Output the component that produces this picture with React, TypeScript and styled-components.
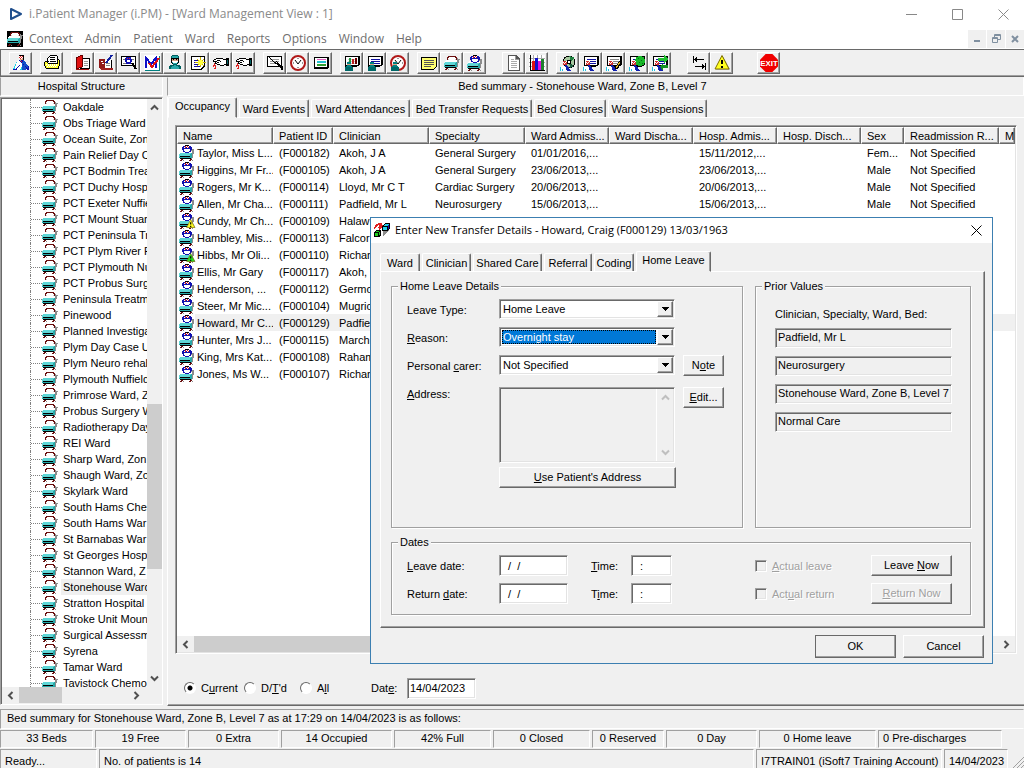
import React from 'react';
import styled, { createGlobalStyle, css } from 'styled-components';

const face = '#f0f0f0';
const shade = '#a0a0a0';
const dark = '#696969';
const light = '#e3e3e3';

const GlobalStyle = createGlobalStyle`
  * { box-sizing: border-box; }
  body {
    margin: 0;
    background: ${face};
    color: #000;
    font: 11px/14px "Liberation Sans", Arial, sans-serif;
  }
  button, input, select, textarea { font: inherit; color: inherit; margin: 0; border-radius: 0; }
`;

const sunken = css`
  border: 1px solid;
  border-color: ${shade} #fff #fff ${shade};
  box-shadow: inset 1px 1px 0 ${dark}, inset -1px -1px 0 ${light};
`;

const Screen = styled.div`
  position: relative;
  display: flex;
  flex-direction: column;
  height: 100vh;
  min-width: 1000px;
  overflow: hidden;
`;

/* ---------- pixel drawings ---------- */

const inks: Record<string, string> = {
  K: '#000', m: '#6b1010', w: '#fff', t: '#5fd6d6', T: '#28a8a8', g: '#8c8c8c', b: '#1010b0',
  r: '#e02020', y: '#ffff30', G: '#20d020', B: '#1450c8', n: '#d0d0d0', d: '#006060', c: '#20d0e8', p: '#d8a080',
};

const bedRows = [
  '....mmmmmmmm....',
  '...mmwwwwwwmm...',
  '...mwwwwwwwwmg..',
  '...mnwwwwwwnmggg',
  '..wwwwwwwwwwwgg.',
  '.wwwwwwwwwwwwgg.',
  '.tttttttttttTgg.',
  'tttttttttttTTg..',
  'tttttttttttTTg..',
  'tKKKKKKKKKKTTg..',
  'TTTTTTTTTTTTTg..',
  '.KKKKKKKKKKKg...',
  '..mm.......mm...',
  '.mm.g.....mm.g..',
];

const patientRows = [
  '......KKKK......',
  '....bbrwrwbb....',
  '...bbwrbwrbbb...',
  '...bbbbbbbbbb...',
  '...bbwwwwwwbbgg.',
  '....bwwwwwwbggg.',
  '..wwbbwwwwbbwgg.',
  '.wwwwwbbbbwwwgg.',
  '.tttttttttttTgg.',
  'tttttttttttTTg..',
  'tttttttttttTTg..',
  'tKKKKKKKKKKTTg..',
  'TTTTTTTTTTTTTg..',
  '.KKKKKKKKKKKg...',
  '..mm.......mm...',
  '.mm.g.....mm.g..',
];

const cubeRows = [
  '....rrrr...KKKKK',
  '..rrrrrr..KccccK',
  '.rrr.rrrrKccccbK',
  '.rr..rrrKKKKKKbK',
  'rr..rrrrKccccKbK',
  'r....rr.KccccKbK',
  '.....r..KccccKK.',
  '..KKKKK.KKKKKKg.',
  '.KGGGKK..ggggg..',
  'KKKKKGK..gggg...',
  'KGGGKGK..ggg....',
  'KGGGKGK..gg.....',
  'KGGGKKK..g......',
  'KKKKKK..........',
];

const doctorRows = [
  '......KKKKK.....',
  '......wrwrK.....',
  '......rwrwK.....',
  '......wrwpK.....',
  '.......pppK.....',
  '.....wbpbbB.....',
  '....wwwbrbBB....',
  '...cwwwwbBBBB...',
  '...wwwwwwBBBB...',
  '..cwwwwwwBbBBB..',
  '..cwwwbwwBBBBBB.',
  '.cwwwbwwwBBBbBBb',
  '.cwwbwwwcBBBBbBb',
  'ccwbwwwwcBBBBbbb',
  'bbbbwwwccBBBB.bb',
];

const folderRows = [
  '......KKKKKKK...',
  '.....KwwwwwwwK..',
  '....KwKKKKKwwK..',
  '...KwwwwwwwwwK..',
  '...KwwKKKKKwwKK.',
  '...KwwwwwwwwwKyK',
  '.KKKKwKKKKKKwKyK',
  'KyyKwwwwwwwwwKyK',
  'KyyyKKKKKKKKKKyK',
  'KywywywywywywyyK',
  'KyyywywywywywyyK',
  '.KywywywywywyyK.',
  '.KyyyyyyyyyyyyK.',
  '..KKKKKKKKKKKKK.',
];

const surgeonRows = [
  '.....dddddd.....',
  '....dTTTTTTd....',
  '....dTTTTTTd....',
  '....KKKKKKKK....',
  '....KpKppKpK....',
  '....KppppppK....',
  '....KwwwwwwK....',
  '....KTwwwwTK....',
  '.....KTTTTK.....',
  '......dddd......',
  '...ddddTTdddd...',
  '..dddTTTTTTddd..',
  '..ddTTTTTTTTdd..',
  '..ddTTTTTTTTdd..',
];

const handRows = [
  '...KKKKKKK...KKK',
  '.KKwwwwwwwKKKKKK',
  'KwwwKKKwwwwwwKdK',
  'KKKKwwwKwwwwwKdK',
  '..KwKKwwwwwwwKdK',
  '.rKKwwwwwwwwwKdK',
  '.r..KKKwwwwKKKKK',
  'rrr....KKKK..KKK',
  'r.r.............',
  '..r.............',
  '.rr.............',
];

function Pixels({ rows }: { rows: string[] }) {
  const rects: React.ReactElement[] = [];
  rows.forEach((row, y) => {
    let x = 0;
    while (x < row.length) {
      let end = x + 1;
      while (end < row.length && row[end] === row[x]) end += 1;
      if (row[x] !== '.') {
        rects.push(<rect key={`${x}-${y}`} x={x} y={y} width={end - x} height={1} fill={inks[row[x]]} />);
      }
      x = end;
    }
  });
  return <>{rects}</>;
}

const Drawing = styled.svg`
  display: block;
  flex: none;
  shape-rendering: crispEdges;
`;

function Sprite({ rows }: { rows: string[] }) {
  return (
    <Drawing width="16" height={rows.length} viewBox={`0 0 16 ${rows.length}`} aria-hidden="true">
      <Pixels rows={rows} />
    </Drawing>
  );
}

/* ---------- toolbar drawings, each on a 16 x 16 grid ---------- */

const Sheet = ({ ink = '#000' }: { ink?: string }) => (
  <>
    <path d="M1 1h15v9h-1v1h-2v1H1z" fill="#000" />
    <path d="M2 2h12v8H2z" fill="#fff" />
    <path d="M4 4h9v1H4zM4 6h9v1H4zM4 8h9v1H4z" fill={ink} />
  </>
);

const TealPerson = () => (
  <g>
    <path d="M3 7h4v4H3z" fill="#008080" />
    <path d="M3 9h4v1H3z" fill="#d8a080" />
    <path d="M1 12h8v4H1z" fill="#006868" />
    <path d="M2 11h6v1H2z" fill="#008080" />
  </g>
);

const BluePerson = () => (
  <g>
    <path d="M3 6h4v4H3z" fill="#d03030" />
    <path d="M3 7h1v1H3zM5 7h1v1H5zM4 8h1v1H4zM6 6h1v1H6z" fill="#fff" />
    <path d="M1 11h4l4 5H0v-3z" fill="#fff" />
    <path d="M5 10l3 1 3 5H7z" fill="#1020b0" />
    <path d="M0 12h1v4H0zM2 14h1v2H2z" fill="#20c0e0" />
  </g>
);

const Clock = () => (
  <g shapeRendering="auto">
    <circle cx="8" cy="8" r="7" fill="#fff" stroke="#b01818" strokeWidth="2" />
    <path d="M8 9L5 5M8 9l3-4" fill="none" stroke="#000" />
    <path d="M8 3v1M8 12v1M3 8h1M12 8h1" stroke="#333" />
  </g>
);

const Magnifier = () => (
  <>
    <path d="M8 7l6 6M9 6l6 7" stroke="#000" />
    <path d="M13 11h3v4h-2z" fill="#000" />
  </>
);

const Warning = ({ fill = '#ffff20' }: { fill?: string }) => (
  <g shapeRendering="auto">
    <path d="M9 1.500L16 14.500H2z" fill="#888" />
    <path d="M8 .5L15 14H1z" fill={fill} stroke="#807000" />
    <path d="M7 5h2v4H7zM7 11h2v2H7z" fill="#000" />
  </g>
);

const Book = () => (
  <>
    <path d="M5 3h10v11H5z" fill="#000" />
    <path d="M6 4h8v9H6z" fill="#fff" />
    <path d="M9 6h4v1H9zM9 8h4v1H9zM9 10h4v1H9z" fill="#999" />
    <path d="M1 3l6-3v12l-6 2z" fill="#e01010" stroke="#600" />
    <path d="M1 14h13v1H1z" fill="#a01010" />
  </>
);

const art: Record<string, React.ReactElement> = {
  doctor: <Pixels rows={doctorRows} />,
  folder: <Pixels rows={folderRows} />,
  book: <Book />,
  bookPen: (
    <>
      <path d="M2 5h12v9H2z" fill="#000" />
      <path d="M7 5h6v8H7z" fill="#fff" />
      <path d="M1 4h6v9H1z" fill="#901818" />
      <path d="M8 8h4v1H8zM8 10h4v1H8z" fill="#888" />
      <path d="M14 0L8 8" stroke="#1020a0" strokeWidth="2" />
      <path d="M1 13h14v2H3z" fill="#a02020" />
      <path d="M3 6h2v1H3zM4 8h2v1H4z" fill="#fff" />
    </>
  ),
  search: (
    <>
      <path d="M0 1h15v10H0z" fill="#000" />
      <path d="M1 2h13v8H1z" fill="#fff" />
      <path d="M2 4h11v1H2zM2 8h11v1H2z" fill="#777" />
      <path d="M5 2h5l1 3-1 4H5L4 5z" fill="#1010b0" />
      <path d="M6 5h3v2H6z" fill="#fff" />
      <path d="M6 3h1v1H6zM8 3h1v1H8z" fill="#e02020" />
      <path d="M11 8l4 6" stroke="#000" strokeWidth="2" />
    </>
  ),
  mark: (
    <>
      <path d="M0 0h16v15H0z" fill="#fff" />
      <path d="M1 15h14v1H1zM15 1h1v15h-1z" fill="#008080" />
      <path d="M2 13V3l5 6 5-6v10" fill="none" stroke="#1010c8" strokeWidth="2" />
      <path d="M5 8l3 4 7-9" fill="none" stroke="#e01010" strokeWidth="2" />
    </>
  ),
  surgeon: <Pixels rows={surgeonRows} />,
  star: (
    <>
      <path d="M1 1h14v10l-3 4H1z" fill="#000" />
      <path d="M2 2h12v8l-3 4H2z" fill="#fff" />
      <path d="M4 5h4v1H4zM4 7h4v1H4zM4 9h4v1H4zM4 11h6v1H4z" fill="#1010a0" />
      <path d="M10 2h1v10h-1zM5 7h11v1H5z" fill="#c8b400" />
      <path d="M7 4l7 7M14 4l-7 7" stroke="#c8b400" />
      <path d="M9 5h3v5H9zM8 6h5v3H8z" fill="#ffff40" />
    </>
  ),
  hand: <g transform="translate(0 3)"><Pixels rows={handRows} /></g>,
  find: (
    <>
      <path d="M0 1h15v11H0z" fill="#000" />
      <path d="M1 2h13v9H1z" fill="#fff" />
      <path d="M3 4h9v1H3zM3 6h9v1H3zM3 8h6v1H3z" fill="#999" />
      <path d="M2 2l7 7" stroke="#000" />
      <Magnifier />
    </>
  ),
  clock: <Clock />,
  stripes: (
    <>
      <path d="M1 2h15v10l-2 2H1z" fill="#000" />
      <path d="M2 3h12v9H2z" fill="#fff" />
      <path d="M4 4h9v1H4z" fill="#e060c0" />
      <path d="M4 6h9v2H4z" fill="#20c0d0" />
      <path d="M4 9h9v2H4z" fill="#30a030" />
    </>
  ),
  chartPerson: (
    <>
      <Sheet ink="#ccc" />
      <path d="M5 3h2v6H5z" fill="#20a040" />
      <path d="M8 4h2v5H8z" fill="#c02020" />
      <path d="M11 3h2v6h-2z" fill="#600" />
      <TealPerson />
    </>
  ),
  sheetPerson: (
    <>
      <Sheet ink="#1010a0" />
      <TealPerson />
    </>
  ),
  clockPerson: (
    <>
      <Clock />
      <TealPerson />
    </>
  ),
  note: (
    <>
      <path d="M0 2h16v10l-4 3H0z" fill="#000" />
      <path d="M1 3h14v8l-3 3H1z" fill="#ffff70" />
      <path d="M3 5h10v1H3zM3 7h10v1H3zM3 9h10v1H3zM3 11h7v1H3z" fill="#555" />
    </>
  ),
  bed: <g transform="translate(0 1)"><Pixels rows={bedRows} /></g>,
  bedPatient: <Pixels rows={patientRows} />,
  page: (
    <>
      <path d="M2 0h8l4 4v12H2z" fill="#555" />
      <path d="M3 1h6v4h4v10H3z" fill="#fff" />
      <path d="M9 1h1v3h3v1H9z" fill="#999" />
      <path d="M5 4h3v1H5zM5 6h6v1H5zM5 8h6v1H5zM5 10h6v1H5zM5 12h6v1H5z" fill="#aaa" />
    </>
  ),
  bars: (
    <>
      <path d="M0 0h16v16H0z" fill="#fff" />
      <path d="M0 3h16v1H0zM0 7h16v1H0zM0 11h16v1H0zM4 0h1v16H4zM8 0h1v16H8zM12 0h1v16h-1z" fill="#aaa" />
      <path d="M1 0h1v15H1zM1 15h15v1H1z" fill="#000" />
      <path d="M3 6h3v9H3z" fill="#e01010" />
      <path d="M6 3h3v12H6z" fill="#1010d0" />
      <path d="M9 6h3v9H9z" fill="#e010e0" />
      <path d="M12 4h3v11h-3z" fill="#208030" />
    </>
  ),
  disc: (
    <>
      <circle cx="9" cy="7" r="6" fill="#a8c8a0" stroke="#000" />
      <path d="M9 1l2 5 4-3z" fill="#208040" />
      <path d="M9 7l5 4-4 2z" fill="#206040" />
      <circle cx="9" cy="7" r="2" fill="#fff" stroke="#000" />
      <BluePerson />
    </>
  ),
  personSheet: (
    <>
      <Sheet ink="#1010a0" />
      <BluePerson />
    </>
  ),
  personPencil: (
    <>
      <Sheet ink="#888" />
      <path d="M15 6l-5 8" stroke="#000" strokeWidth="3" />
      <path d="M14 7l-4 6" stroke="#e0b020" />
      <BluePerson />
    </>
  ),
  personGreen: (
    <>
      <Sheet ink="#1010a0" />
      <circle cx="11" cy="6" r="5" fill="#18b828" />
      <path d="M9 3h1v1H9zM12 5h1v1h-1zM10 7h1v1h-1zM13 8h1v1h-1z" fill="#0a7018" />
      <BluePerson />
    </>
  ),
  personArrows: (
    <>
      <Sheet ink="#1010a0" />
      <path d="M6 3h6V0l4 4-4 4V6H6z" fill="#20c030" />
      <path d="M16 10h-5V8l-4 4 4 4v-3h5z" fill="#109020" />
      <BluePerson />
    </>
  ),
  arrows: (
    <>
      <path d="M2 1h1v7H2zM3 4h10v1H3zM4 3h1v3H4zM5 2h1v5H5z" fill="#000" />
      <path d="M14 8h1v7h-1zM4 11h10v1H4zM12 10h1v3h-1zM11 9h1v5h-1z" fill="#000" />
    </>
  ),
  warning: <Warning />,
  exit: (
    <g shapeRendering="auto">
      <path d="M5 0h6l5 5v6l-5 5H5l-5-5V5z" fill="#f00000" />
      <text x="8" y="11" textAnchor="middle" fontSize="7" fontWeight="700" fill="#fff">EXIT</text>
    </g>
  ),
};

const toolGroups: string[][] = [
  ['doctor'],
  ['folder'],
  ['book', 'bookPen', 'search', 'mark', 'surgeon', 'star', 'hand', 'hand'],
  ['find', 'clock', 'stripes'],
  ['chartPerson', 'sheetPerson', 'clockPerson'],
  ['note', 'bed', 'bedPatient'],
  ['page', 'bars'],
  ['disc', 'personSheet', 'personPencil', 'personGreen', 'personArrows'],
  ['arrows', 'warning'],
  ['exit'],
];
const groupGaps = [0, 8, 8, 8, 8, 8, 16, 8, 16, 24];

/* ---------- window frame ---------- */

const TitleBar = styled.header`
  display: flex;
  align-items: center;
  height: 28px;
  flex: none;
  padding: 0 15px 0 9px;
  background: #fff;
  color: #8a8a8a;
  font: 11px/16px "Open Sans", "Noto Sans", sans-serif;
`;

const TitleText = styled.h1`
  flex: 1;
  margin: 0 0 0 6px;
  font: inherit;
  font-size: 12px;
`;

const FrameButton = styled.button`
  width: 12px;
  height: 12px;
  padding: 0;
  margin-left: 34px;
  border: 0;
  background: none;
`;

const MenuBar = styled.nav`
  display: flex;
  align-items: center;
  height: 21px;
  flex: none;
  padding: 0 0 0 7px;
  background: #fff;
  color: #6e6e6e;
`;

const MenuButton = styled.button`
  padding: 0 6px;
  border: 0;
  background: none;
  font: 12px/18px "Open Sans", "Noto Sans", sans-serif;
`;

const MdiButtons = styled.div`
  display: flex;
  gap: 1px;
  margin-left: auto;
`;

const MdiButton = styled.button`
  display: grid;
  place-items: center;
  width: 18px;
  height: 18px;
  padding: 0;
  border: 0;
  background: ${face};
`;

const ToolBar = styled.div`
  display: flex;
  align-items: center;
  height: 28px;
  flex: none;
  padding-left: 8px;
  border: 1px solid ${dark};
  border-width: 1px 0 1px 1px;
  box-shadow: inset 0 -1px 0 ${shade};
`;

const ToolGroup = styled.div<{ $gap: number }>`
  display: flex;
  margin-left: ${(p) => p.$gap}px;
`;

const ToolButton = styled.button`
  display: grid;
  place-items: center;
  width: 23px;
  height: 22px;
  padding: 0;
  background: ${face};
  border: 1px solid;
  border-color: #fff ${dark} ${dark} #fff;
  box-shadow: inset -1px -1px 0 ${shade};
`;

const Workspace = styled.div`
  display: grid;
  grid-template-columns: 163px minmax(0, 1fr);
  column-gap: 4px;
  flex: 1;
  min-height: 0;
`;

const Column = styled.section`
  display: flex;
  flex-direction: column;
  min-width: 0;
  min-height: 0;
`;

const PaneTitle = styled.h2<{ $inset?: number }>`
  flex: none;
  height: 19px;
  margin: 0 0 1px;
  padding-right: ${(p) => p.$inset ?? 0}px;
  border: 1px solid;
  border-color: ${face} #fff #fff ${shade};
  font: inherit;
  line-height: 17px;
  text-align: center;
`;

/* ---------- scroll bars ---------- */

const Chevron = styled.svg<{ $turn: number; $pale?: boolean }>`
  display: block;
  flex: none;
  transform: rotate(${(p) => p.$turn}deg);
  fill: none;
  stroke: ${(p) => (p.$pale ? '#bfbfbf' : '#505050')};
  stroke-width: 2;
`;

const Arrow = ({ turn, pale }: { turn: number; pale?: boolean }) => {
  const upright = turn % 180 === 0;
  return (
    <Chevron
      $turn={turn}
      $pale={pale}
      width={upright ? 15 : 17}
      height="17"
      viewBox={upright ? '1 0 15 17' : '0 0 17 17'}
      aria-hidden="true"
    >
      <path d="M5 10.500l3.500-3.500 3.500 3.500" />
    </Chevron>
  );
};

const VScroll = styled.div`
  display: flex;
  flex-direction: column;
  align-items: center;
  width: 15px;
  flex: none;
  background: ${face};
`;

const HScroll = styled.div`
  display: flex;
  height: 16px;
  flex: none;
  background: ${face};
`;

const Track = styled.div<{ $before: number; $thumb: number; $after: number; $vertical?: boolean }>`
  display: grid;
  flex: 1;
  align-self: stretch;
  ${(p) => (p.$vertical ? 'grid-template-rows' : 'grid-template-columns')}:
    ${(p) => `${p.$before}fr ${p.$thumb}fr ${p.$after}fr`};
`;

const Thumb = styled.div<{ $vertical?: boolean }>`
  ${(p) => (p.$vertical ? 'grid-row: 2' : 'grid-column: 2')};
  background: #cdcdcd;
`;

/* ---------- ward tree ---------- */

const TreeFrame = styled.div`
  display: flex;
  flex-direction: column;
  flex: 1;
  min-height: 0;
  margin-bottom: 1px;
  border: 1px solid;
  border-color: ${shade} #fff #fff ${shade};
  box-shadow: inset 1px 1px 0 ${dark};
  padding: 1px 0 1px 1px;
`;

const TreeBody = styled.div`
  display: flex;
  flex: 1;
  min-height: 0;
`;

const TreeList = styled.ul`
  flex: 1;
  min-width: 0;
  margin: 0;
  padding: 0 0 0 28px;
  overflow: hidden;
  list-style: none;
  background: #fff;
`;

const TreeItem = styled.li`
  display: flex;
  align-items: center;
  height: 16px;
  border-left: 1px dotted #808080;
`;

const Twig = styled.span`
  width: 11px;
  flex: none;
  border-top: 1px dotted #808080;
`;

const TreeLabel = styled.span<{ $on: boolean }>`
  flex: 1;
  margin-left: 3px;
  padding-left: 2px;
  overflow: hidden;
  white-space: nowrap;
  line-height: 16px;
  background: ${(p) => (p.$on ? face : 'none')};
`;

const wards = [
  'Oakdale', 'Obs Triage Ward', 'Ocean Suite, Zone', 'Pain Relief Day C', 'PCT Bodmin Treat', 'PCT Duchy Hosp',
  'PCT Exeter Nuffie', 'PCT Mount Stuar', 'PCT Peninsula Tr', 'PCT Plym River P', 'PCT Plymouth Nu',
  'PCT Probus Surg', 'Peninsula Treatm', 'Pinewood', 'Planned Investiga', 'Plym Day Case U', 'Plym Neuro rehab',
  'Plymouth Nuffield', 'Primrose Ward, Z', 'Probus Surgery W', 'Radiotherapy Day', 'REI Ward', 'Sharp Ward, Zon',
  'Shaugh Ward, Zo', 'Skylark Ward', 'South Hams Cher', 'South Hams War', 'St Barnabas War', 'St Georges Hosp',
  'Stannon Ward, Z', 'Stonehouse Ward', 'Stratton Hospital', 'Stroke Unit Moun', 'Surgical Assessm', 'Syrena',
  'Tamar Ward', 'Tavistock Chemo',
];

/* ---------- tabs ---------- */

const TabStrip = styled.div`
  display: flex;
  align-items: flex-end;
  gap: 2px;
  flex: none;
`;

const Tab = styled.button<{ $w: number; $on?: boolean }>`
  position: relative;
  width: ${(p) => p.$w}px;
  height: ${(p) => (p.$on ? 21 : 18)}px;
  margin-bottom: ${(p) => (p.$on ? -1 : 0)}px;
  padding: 0 0 ${(p) => (p.$on ? 3 : 0)}px;
  white-space: nowrap;
  background: ${face};
  border: 1px solid;
  border-color: #fff ${dark} ${face} #fff;
  border-bottom-width: ${(p) => (p.$on ? 1 : 0)}px;
  border-radius: 2px 2px 0 0;
  box-shadow: inset -1px 0 0 ${shade};
  z-index: ${(p) => (p.$on ? 1 : 0)};
`;

/* ---------- occupancy list ---------- */

const MainPanel = styled.div`
  display: flex;
  flex-direction: column;
  flex: 1;
  min-height: 0;
  border-left: 1px solid #fff;
  border-bottom: 1px solid ${dark};
  box-shadow: inset 0 -1px 0 ${shade};
`;

const TabPage = styled.div`
  display: flex;
  flex-direction: column;
  flex: 1;
  min-height: 0;
  padding: 7px 7px 0;
  border-top: 1px solid #fff;
`;

const ListFrame = styled.div`
  display: flex;
  flex-direction: column;
  flex: 1;
  min-height: 0;
  padding: 1px;
  background: #fff;
  ${sunken}
`;

const ListBody = styled.div`
  flex: 1;
  min-height: 0;
  overflow: hidden;
`;

const Table = styled.table`
  width: 100%;
  table-layout: fixed;
  border-collapse: separate;
  border-spacing: 0;
`;

const Th = styled.th`
  height: 17px;
  padding: 0 0 0 5px;
  overflow: hidden;
  text-align: left;
  font-weight: 400;
  white-space: nowrap;
  background: ${face};
  border: 1px solid;
  border-color: #fff ${dark} ${dark} #fff;
  box-shadow: inset -1px -1px 0 ${shade};
`;

const Row = styled.tr<{ $on: boolean }>`
  td { background: ${(p) => (p.$on ? face : 'transparent')}; }
  td:first-child {
    background: ${(p) => (p.$on ? `linear-gradient(90deg, #fff 18px, ${face} 18px)` : 'transparent')};
  }
`;

const Td = styled.td`
  height: 17px;
  padding: 0 0 0 6px;
  overflow: hidden;
  white-space: nowrap;
`;

const NameCell = styled.div`
  display: flex;
  align-items: center;
  gap: 2px;
  height: 17px;
  margin-left: -4px;
`;

const BedMark = styled.span`
  position: relative;
  height: 16px;
`;

const AlertMark = styled.svg`
  position: absolute;
  right: -1px;
  bottom: 0;
`;

const columns: [string, number | undefined][] = [
  ['Name', 96], ['Patient ID', 60], ['Clinician', 96], ['Specialty', 96], ['Ward Admiss...', 84],
  ['Ward Discha...', 84], ['Hosp. Admis...', 84], ['Hosp. Disch...', 84], ['Sex', 43], ['Readmission R...', 95],
  ['M', undefined],
];

const patients: string[][] = [
  ['Taylor, Miss L...', '(F000182)', 'Akoh, J A', 'General Surgery', '01/01/2016,...', '15/11/2012,...', 'Fem...'],
  ['Higgins, Mr Fr...', '(F000105)', 'Akoh, J A', 'General Surgery', '23/06/2013,...', '23/06/2013,...', 'Male'],
  ['Rogers, Mr K...', '(F000114)', 'Lloyd, Mr C T', 'Cardiac Surgery', '20/06/2013,...', '20/06/2013,...', 'Male'],
  ['Allen, Mr Cha...', '(F000111)', 'Padfield, Mr L', 'Neurosurgery', '15/06/2013,...', '15/06/2013,...', 'Male'],
  ['Cundy, Mr Ch...', '(F000109)', 'Halaw'],
  ['Hambley, Mis...', '(F000113)', 'Falcor'],
  ['Hibbs, Mr Oli...', '(F000110)', 'Richar'],
  ['Ellis, Mr Gary', '(F000117)', 'Akoh,'],
  ['Henderson, ...', '(F000112)', 'Germo'],
  ['Steer, Mr Mic...', '(F000104)', 'Mugric'],
  ['Howard, Mr C...', '(F000129)', 'Padfie'],
  ['Hunter, Mrs J...', '(F000115)', 'March'],
  ['King, Mrs Kat...', '(F000108)', 'Raham'],
  ['Jones, Ms W...', '(F000107)', 'Richar'],
];
const alerts: Record<number, string> = { 4: '#ffff20', 6: '#20e020' };

const FilterBar = styled.form`
  display: flex;
  align-items: center;
  flex: none;
  height: 51px;
  padding: 17px 0 0 9px;
`;

const RadioLabel = styled.label<{ $w: number }>`
  display: flex;
  align-items: center;
  gap: 5px;
  width: ${(p) => p.$w}px;
`;

const Radio = styled.input`
  appearance: none;
  width: 12px;
  height: 12px;
  border: 1px solid;
  border-color: ${dark} #fff #fff ${dark};
  border-radius: 50%;
  background: #fff;
  &:checked { background: radial-gradient(circle, #000 2px, #fff 3px); }
`;

const DateLabel = styled.label`
  width: 36px;
`;

const TextBox = styled.input<{ $w: number }>`
  width: ${(p) => p.$w}px;
  height: 21px;
  padding: 1px 2px;
  background: #fff;
  outline: none;
  white-space: pre;
  ${sunken}
`;

/* ---------- status rows ---------- */

const SummaryRow = styled.div`
  flex: none;
  height: 20px;
  margin: 3px 0 1px;
  padding-left: 6px;
  border: 1px solid;
  border-color: ${shade} transparent #fff ${shade};
  line-height: 16px;
`;

const CountsRow = styled.div`
  display: grid;
  grid-template-columns: 93fr 91fr 91fr 111fr 97fr 97fr 72fr 91fr 117fr 124fr 20px;
  gap: 2px;
  flex: none;
  height: 18px;
`;

const StatusRow = styled.footer`
  display: grid;
  grid-template-columns: 97px 1fr 186px 64px 14px;
  gap: 2px;
  flex: none;
  height: 19px;
  margin-top: 1px;
`;

const StatusCell = styled.div<{ $left?: boolean }>`
  padding: 0 4px;
  border: 1px solid;
  border-color: ${shade} #fff #fff ${shade};
  line-height: 15px;
  text-align: ${(p) => (p.$left ? 'left' : 'center')};
  white-space: nowrap;
`;

const FooterCell = styled(StatusCell)`
  padding: 4px 0 0 4px;
  border-bottom: 0;
  line-height: 14px;
  text-align: left;
`;

/* ---------- transfer dialog ---------- */

const Dialog = styled.section`
  position: absolute;
  left: 370px;
  top: 217px;
  width: 623px;
  background: ${face};
  border: 1px solid #3c7fb1;
  z-index: 2;
`;

const DialogTitle = styled.header`
  display: flex;
  align-items: center;
  gap: 5px;
  height: 25px;
  padding: 0 10px 2px 3px;
  background: #fff;
  font: 11px/16px "Open Sans", "Noto Sans", sans-serif;
`;

const DialogHeading = styled.h2`
  flex: 1;
  margin: 0;
  font: inherit;
`;

const DialogContent = styled.div`
  padding: 8px 7px 5px 9px;
`;

const DialogPage = styled.div`
  padding: 7px 13px 12px 10px;
  border: 1px solid;
  border-color: #fff ${dark} ${dark} #fff;
  box-shadow: inset -1px -1px 0 ${shade};
`;

const Panels = styled.div`
  display: grid;
  grid-template-columns: 352px 216px;
  column-gap: 12px;
  margin-bottom: 7px;
`;

const Group = styled.fieldset`
  min-width: 0;
  margin: 0;
  padding: 6px 18px 0 15px;
  border: 1px solid ${shade};
  box-shadow: 1px 1px 0 #fff, inset 1px 1px 0 #fff;
`;

const Legend = styled.legend`
  margin-left: -9px;
  padding: 0 2px;
  background: ${face};
`;

const FieldRow = styled.div`
  display: flex;
  height: 28px;
`;

const Caption = styled.label<{ $w: number }>`
  width: ${(p) => p.$w}px;
  flex: none;
  padding-top: 4px;
`;

const AddressRow = styled(FieldRow)`
  height: 144px;
  padding-top: 4px;
  ${Caption} { padding-top: 0; }
`;

const DropDown = styled.span`
  display: flex;
  width: 176px;
  height: 20px;
  padding: 1px;
  background: #fff;
  ${sunken}
`;

const Select = styled.select<{ $active?: boolean }>`
  appearance: none;
  flex: 1;
  min-width: 0;
  margin: 1px 0 1px 1px;
  padding: 0 0 0 1px;
  border: 0;
  outline: ${(p) => (p.$active ? '1px dotted #000' : 'none')};
  outline-offset: -1px;
  line-height: 14px;
  background: ${(p) => (p.$active ? '#0078d7' : '#fff')};
  color: ${(p) => (p.$active ? '#fff' : '#000')};
`;

const DropArrow = styled.span`
  display: grid;
  place-items: center;
  width: 16px;
  margin-left: 1px;
  background: ${face};
  border: 1px solid;
  border-color: #fff ${dark} ${dark} #fff;
  box-shadow: inset -1px -1px 0 ${shade};
`;

const PushButton = styled.button<{ $w: number; $default?: boolean }>`
  width: ${(p) => p.$w}px;
  height: ${(p) => (p.$default ? 23 : 21)}px;
  flex: none;
  padding: 0 0 1px;
  background: ${face};
  border: 1px solid;
  border-color: #fff ${dark} ${dark} #fff;
  box-shadow: inset -1px -1px 0 ${shade};
  outline: ${(p) => (p.$default ? `1px solid ${dark}` : 'none')};
  outline-offset: -1px;
  &:disabled { color: ${shade}; text-shadow: 1px 1px 0 #fff; }
`;

const SideButton = styled(PushButton)`
  margin-left: 8px;
`;

const AddressStack = styled.div`
  display: flex;
  flex-direction: column;
  gap: 4px;
  width: 176px;
`;

const AddressBox = styled.span`
  display: flex;
  width: 176px;
  height: 76px;
  padding: 1px;
  ${sunken}
`;

const AddressText = styled.textarea`
  flex: 1;
  min-width: 0;
  padding: 2px;
  border: 0;
  outline: none;
  resize: none;
  background: ${face};
`;

const PaleScroll = styled(VScroll)`
  width: 17px;
  justify-content: space-between;
  border-left: 1px solid #fff;
`;

const PriorBody = styled.div`
  display: flex;
  flex-direction: column;
  gap: 8px;
  padding: 8px 0 0 4px;
`;

const PriorHeading = styled.p`
  margin: 0 0 -1px;
`;

const PriorValue = styled.output`
  width: 177px;
  height: 20px;
  padding: 1px 2px;
  white-space: nowrap;
  ${sunken}
`;

const DatesGroup = styled(Group)`
  padding-bottom: 3px;
`;

const DateGap = styled.span`
  width: 23px;
`;

const CheckLabel = styled.label`
  display: flex;
  align-items: center;
  gap: 5px;
  flex: 1;
  height: 22px;
  margin-left: 83px;
  color: ${shade};
  text-shadow: 1px 1px 0 #fff;
`;

const CheckBox = styled.input`
  appearance: none;
  width: 12px;
  height: 12px;
  background: ${face};
  ${sunken}
`;

const DialogButtons = styled.div`
  display: flex;
  justify-content: flex-end;
  gap: 7px;
  padding: 7px 1px 0 0;
`;

const TallButton = styled(PushButton)`
  height: 23px;
`;

function DropField({ id, value, active }: { id: string; value: string; active?: boolean }) {
  return (
    <DropDown>
      <Select id={id} $active={active} defaultValue={value}>
        <option>{value}</option>
      </Select>
      <DropArrow>
        <Drawing width="7" height="4" viewBox="0 0 7 4" aria-hidden="true">
          <path d="M0 0h7v1H0zM1 1h5v1H1zM2 2h3v1H2zM3 3h1v1H3z" />
        </Drawing>
      </DropArrow>
    </DropDown>
  );
}

function CloseCross() {
  return (
    <svg width="11" height="11" viewBox="0 0 11 11" fill="none" stroke="currentColor" aria-hidden="true">
      <path d="M.5.5l10 10M10.500.5l-10 10" />
    </svg>
  );
}

function TransferDialog() {
  return (
    <Dialog role="dialog" aria-labelledby="dialog-heading">
      <DialogTitle>
        <Sprite rows={cubeRows} />
        <DialogHeading id="dialog-heading">Enter New Transfer Details - Howard, Craig (F000129) 13/03/1963</DialogHeading>
        <FrameButton aria-label="Close dialog"><CloseCross /></FrameButton>
      </DialogTitle>
      <DialogContent>
        <TabStrip>
          <Tab $w={40}>Ward</Tab>
          <Tab $w={49}>Clinician</Tab>
          <Tab $w={69}>Shared Care</Tab>
          <Tab $w={48}>Referral</Tab>
          <Tab $w={40}>Coding</Tab>
          <Tab $w={75} $on>Home Leave</Tab>
        </TabStrip>
        <DialogPage>
          <Panels>
            <Group>
              <Legend>Home Leave Details</Legend>
              <FieldRow>
                <Caption $w={92} htmlFor="leave-type">Leave Type:</Caption>
                <DropField id="leave-type" value="Home Leave" />
              </FieldRow>
              <FieldRow>
                <Caption $w={92} htmlFor="reason"><u>R</u>eason:</Caption>
                <DropField id="reason" value="Overnight stay" active />
              </FieldRow>
              <FieldRow>
                <Caption $w={92} htmlFor="carer">Personal <u>c</u>arer:</Caption>
                <DropField id="carer" value="Not Specified" />
                <SideButton $w={41}>N<u>o</u>te</SideButton>
              </FieldRow>
              <AddressRow>
                <Caption $w={92} htmlFor="address"><u>A</u>ddress:</Caption>
                <AddressStack>
                  <AddressBox>
                    <AddressText id="address" readOnly />
                    <PaleScroll>
                      <Arrow turn={0} pale />
                      <Arrow turn={180} pale />
                    </PaleScroll>
                  </AddressBox>
                  <PushButton $w={177}><u>U</u>se Patient's Address</PushButton>
                </AddressStack>
                <SideButton $w={41}><u>E</u>dit...</SideButton>
              </AddressRow>
            </Group>
            <Group>
              <Legend>Prior Values</Legend>
              <PriorBody>
                <PriorHeading>Clinician, Specialty, Ward, Bed:</PriorHeading>
                <PriorValue>Padfield, Mr L</PriorValue>
                <PriorValue>Neurosurgery</PriorValue>
                <PriorValue>Stonehouse Ward, Zone B, Level 7</PriorValue>
                <PriorValue>Normal Care</PriorValue>
              </PriorBody>
            </Group>
          </Panels>
          <DatesGroup>
            <Legend>Dates</Legend>
            <FieldRow>
              <Caption $w={92} htmlFor="leave-date"><u>L</u>eave date:</Caption>
              <TextBox $w={69} id="leave-date" defaultValue="  /  /" />
              <DateGap />
              <Caption $w={40} htmlFor="leave-time"><u>T</u>ime:</Caption>
              <TextBox $w={41} id="leave-time" defaultValue="  :" />
              <CheckLabel><CheckBox type="checkbox" disabled /><span><u>A</u>ctual leave</span></CheckLabel>
              <PushButton $w={81}>Leave <u>N</u>ow</PushButton>
            </FieldRow>
            <FieldRow>
              <Caption $w={92} htmlFor="return-date">Return <u>d</u>ate:</Caption>
              <TextBox $w={69} id="return-date" defaultValue="  /  /" />
              <DateGap />
              <Caption $w={40} htmlFor="return-time">T<u>i</u>me:</Caption>
              <TextBox $w={41} id="return-time" defaultValue="  :" />
              <CheckLabel><CheckBox type="checkbox" disabled /><span>Act<u>u</u>al return</span></CheckLabel>
              <PushButton $w={81} disabled><u>R</u>eturn Now</PushButton>
            </FieldRow>
          </DatesGroup>
        </DialogPage>
        <DialogButtons>
          <TallButton $w={81} $default>OK</TallButton>
          <TallButton $w={81}>Cancel</TallButton>
        </DialogButtons>
      </DialogContent>
    </Dialog>
  );
}

function PatientRow({ data, index }: { data: string[]; index: number }) {
  const [name, id, clinician, specialty, ward, hosp, sex] = data;
  return (
    <Row $on={index === 10}>
      <Td>
        <NameCell>
          <BedMark>
            <Sprite rows={patientRows} />
            {alerts[index] && (
              <AlertMark width="10" height="10" viewBox="0 0 17 16" aria-hidden="true">
                <Warning fill={alerts[index]} />
              </AlertMark>
            )}
          </BedMark>
          {name}
        </NameCell>
      </Td>
      <Td>{id}</Td>
      <Td>{clinician}</Td>
      <Td>{specialty}</Td>
      <Td>{ward}</Td>
      <Td />
      <Td>{hosp}</Td>
      <Td />
      <Td>{sex}</Td>
      <Td>{sex && 'Not Specified'}</Td>
      <Td />
    </Row>
  );
}

const ScrollCorner = styled.span`
  width: 17px;
`;

export default function App() {
  return (
    <Screen>
      <GlobalStyle />
      <TitleBar>
        <svg width="14" height="14" viewBox="0 0 14 14" aria-hidden="true">
          <path d="M2 2l10 5-10 5z" fill="#fff" stroke="#1f4e8c" strokeWidth="2" strokeLinejoin="round" />
        </svg>
        <TitleText>i.Patient Manager (i.PM) - [Ward Management View : 1]</TitleText>
        <FrameButton aria-label="Minimize">
          <svg width="11" height="11" viewBox="0 0 11 11"><path d="M0 5.500h11" stroke="#888" /></svg>
        </FrameButton>
        <FrameButton aria-label="Maximize">
          <svg width="11" height="11" viewBox="0 0 11 11"><path d="M.5.5h10v10H.5z" fill="none" stroke="#888" /></svg>
        </FrameButton>
        <FrameButton aria-label="Close"><CloseCross /></FrameButton>
      </TitleBar>
      <MenuBar>
        <Drawing width="16" height="16" viewBox="0 0 16 16" aria-hidden="true">
          <path d="M0 0h16v16H0z" fill="#000" />
          <g transform="translate(0 1)"><Pixels rows={bedRows} /></g>
        </Drawing>
        {['Context', 'Admin', 'Patient', 'Ward', 'Reports', 'Options', 'Window', 'Help'].map((m) => (
          <MenuButton key={m}>{m}</MenuButton>
        ))}
        <MdiButtons>
          <MdiButton aria-label="Minimize view">
            <svg width="8" height="8" viewBox="0 0 8 8"><path d="M1 5h6v2H1z" fill="#8090a0" /></svg>
          </MdiButton>
          <MdiButton aria-label="Restore view">
            <svg width="9" height="9" viewBox="0 0 9 9" fill="none" stroke="#8090a0">
              <path d="M2.500 3V.5h6v5H6" /><path d="M.5 3.500h5v5h-5zM.5 4.500h5M3 1.500h5" />
            </svg>
          </MdiButton>
          <MdiButton aria-label="Close view">
            <svg width="8" height="8" viewBox="0 0 8 8" stroke="#8090a0" strokeWidth="2"><path d="M1 1l6 6M7 1L1 7" /></svg>
          </MdiButton>
        </MdiButtons>
      </MenuBar>
      <ToolBar role="toolbar">
        {toolGroups.map((group, g) => (
          <ToolGroup key={g} $gap={groupGaps[g]}>
            {group.map((name, i) => (
              <ToolButton key={i} aria-label={name}>
                <Drawing width={name === 'exit' ? 18 : 16} height={name === 'exit' ? 18 : 16} viewBox="0 0 16 16">
                  {art[name]}
                </Drawing>
              </ToolButton>
            ))}
          </ToolGroup>
        ))}
      </ToolBar>
      <Workspace>
        <Column>
          <PaneTitle>Hospital Structure</PaneTitle>
          <TreeFrame>
            <TreeBody>
              <TreeList>
                {wards.map((ward) => (
                  <TreeItem key={ward}>
                    <Twig />
                    <Sprite rows={bedRows} />
                    <TreeLabel $on={ward === 'Stonehouse Ward'}>{ward}</TreeLabel>
                  </TreeItem>
                ))}
              </TreeList>
              <VScroll>
                <Arrow turn={0} />
                <Track $vertical $before={289} $thumb={165} $after={101}>
                  <Thumb $vertical />
                </Track>
                <Arrow turn={180} />
              </VScroll>
            </TreeBody>
            <HScroll>
              <Arrow turn={-90} />
              <Track $before={0} $thumb={43} $after={66}>
                <Thumb />
              </Track>
              <Arrow turn={90} />
              <ScrollCorner />
            </HScroll>
          </TreeFrame>
        </Column>
        <Column>
          <PaneTitle $inset={26}>Bed summary - Stonehouse Ward, Zone B, Level 7</PaneTitle>
          <MainPanel>
            <TabStrip>
              <Tab $w={69} $on>Occupancy</Tab>
              <Tab $w={70}>Ward Events</Tab>
              <Tab $w={99}>Ward Attendances</Tab>
              <Tab $w={120}>Bed Transfer Requests</Tab>
              <Tab $w={72}>Bed Closures</Tab>
              <Tab $w={99}>Ward Suspensions</Tab>
            </TabStrip>
            <TabPage>
              <ListFrame>
                <ListBody>
                  <Table>
                    <colgroup>
                      {columns.map(([name, w]) => <col key={name} width={w} />)}
                    </colgroup>
                    <thead>
                      <tr>{columns.map(([name]) => <Th key={name}>{name}</Th>)}</tr>
                    </thead>
                    <tbody>
                      {patients.map((p, i) => <PatientRow key={p[1]} data={p} index={i} />)}
                    </tbody>
                  </Table>
                </ListBody>
                <HScroll>
                  <Arrow turn={-90} />
                  <Track $before={0} $thumb={640} $after={164}>
                    <Thumb />
                  </Track>
                  <Arrow turn={90} />
                </HScroll>
              </ListFrame>
              <FilterBar>
                <RadioLabel $w={60}><Radio type="radio" name="show" defaultChecked /><span>C<u>u</u>rrent</span></RadioLabel>
                <RadioLabel $w={56}><Radio type="radio" name="show" /><span>D/<u>T</u>'d</span></RadioLabel>
                <RadioLabel $w={71}><Radio type="radio" name="show" /><span>A<u>l</u>l</span></RadioLabel>
                <DateLabel htmlFor="as-at">Dat<u>e</u>:</DateLabel>
                <TextBox $w={69} id="as-at" defaultValue="14/04/2023" />
              </FilterBar>
            </TabPage>
          </MainPanel>
        </Column>
      </Workspace>
      <SummaryRow>Bed summary for Stonehouse Ward, Zone B, Level 7 as at 17:29 on 14/04/2023 is as follows:</SummaryRow>
      <CountsRow>
        <StatusCell>33 Beds</StatusCell>
        <StatusCell>19 Free</StatusCell>
        <StatusCell>0 Extra</StatusCell>
        <StatusCell>14 Occupied</StatusCell>
        <StatusCell>42% Full</StatusCell>
        <StatusCell>0 Closed</StatusCell>
        <StatusCell>0 Reserved</StatusCell>
        <StatusCell>0 Day</StatusCell>
        <StatusCell>0 Home leave</StatusCell>
        <StatusCell $left>0 Pre-discharges</StatusCell>
      </CountsRow>
      <StatusRow>
        <FooterCell>Ready...</FooterCell>
        <FooterCell>No. of patients is 14</FooterCell>
        <FooterCell>I7TRAIN01 (iSoft7 Training Account)</FooterCell>
        <FooterCell>14/04/2023</FooterCell>
        <Drawing width="14" height="19" viewBox="0 0 14 19" aria-hidden="true">
          <path d="M3 19L14 8M7 19l7-7M11 19l3-3" stroke="#a0a0a0" />
        </Drawing>
      </StatusRow>
      <TransferDialog />
    </Screen>
  );
}
